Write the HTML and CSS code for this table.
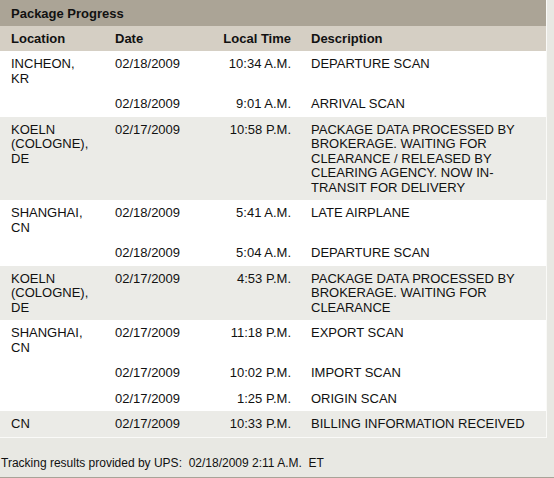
FILE: index.html
```html
<!DOCTYPE html>
<html>
<head>
<meta charset="utf-8">
<link rel="stylesheet" href="styles.css">
</head>
<body>
<div class="panel">
  <div class="panel-title">Package Progress</div>
  <table class="progress">
    <colgroup>
      <col class="c-loc"><col class="c-date"><col class="c-time"><col class="c-desc">
    </colgroup>
    <thead>
      <tr><th>Location</th><th>Date</th><th class="time">Local Time</th><th>Description</th></tr>
    </thead>
    <tbody class="white">
      <tr><td>INCHEON, KR</td><td>02/18/2009</td><td class="time">10:34 A.M.</td><td>DEPARTURE SCAN</td></tr>
      <tr><td></td><td>02/18/2009</td><td class="time">9:01 A.M.</td><td>ARRIVAL SCAN</td></tr>
    </tbody>
    <tbody class="gray">
      <tr><td>KOELN (COLOGNE), DE</td><td>02/17/2009</td><td class="time">10:58 P.M.</td><td>PACKAGE DATA PROCESSED BY BROKERAGE. WAITING FOR CLEARANCE / RELEASED BY CLEARING AGENCY. NOW IN-TRANSIT FOR DELIVERY</td></tr>
    </tbody>
    <tbody class="white">
      <tr><td>SHANGHAI, CN</td><td>02/18/2009</td><td class="time">5:41 A.M.</td><td>LATE AIRPLANE</td></tr>
      <tr><td></td><td>02/18/2009</td><td class="time">5:04 A.M.</td><td>DEPARTURE SCAN</td></tr>
    </tbody>
    <tbody class="gray">
      <tr><td>KOELN (COLOGNE), DE</td><td>02/17/2009</td><td class="time">4:53 P.M.</td><td>PACKAGE DATA PROCESSED BY BROKERAGE. WAITING FOR CLEARANCE</td></tr>
    </tbody>
    <tbody class="white">
      <tr><td>SHANGHAI, CN</td><td>02/17/2009</td><td class="time">11:18 P.M.</td><td>EXPORT SCAN</td></tr>
      <tr><td></td><td>02/17/2009</td><td class="time">10:02 P.M.</td><td>IMPORT SCAN</td></tr>
      <tr><td></td><td>02/17/2009</td><td class="time">1:25 P.M.</td><td>ORIGIN SCAN</td></tr>
    </tbody>
    <tbody class="gray">
      <tr><td>CN</td><td>02/17/2009</td><td class="time">10:33 P.M.</td><td>BILLING INFORMATION RECEIVED</td></tr>
    </tbody>
  </table>
</div>
<div class="footer">Tracking results provided by UPS:&nbsp; 02/18/2009 2:11 A.M.&nbsp; ET</div>
</body>
</html>
```

FILE: styles.css
```css
html, body {
  margin: 0;
  padding: 0;
  background: #e8e8e3;
  font-family: "Liberation Sans", Arial, Helvetica, sans-serif;
  font-size: 13px;
  color: #111;
}

.panel {
  width: 546px;
  border-right: 1px solid #fafaf8;
  border-bottom: 1px solid #fafaf8;
}

.panel-title {
  background: #aba496;
  font-weight: bold;
  line-height: 14.5px;
  padding: 7px 11px 4.5px;
}

.progress {
  width: 100%;
  table-layout: fixed;
  border-collapse: collapse;
  border-spacing: 0;
}

.c-loc { width: 105px; }
.c-date { width: 100px; }
.c-time { width: 96px; }

.progress th,
.progress td {
  text-align: left;
  vertical-align: top;
  line-height: 14.5px;
  padding: 6px 10px 5px;
}

.progress th {
  background: #d5cfc4;
  font-weight: bold;
  padding-top: 6px;
  padding-bottom: 4.5px;
}

.progress th:first-child,
.progress td:first-child {
  padding-left: 11px;
  padding-right: 14px;
}

.progress .time {
  text-align: right;
}

.white td { background: #ffffff; }
.gray td { background: #ebebe7; }

.footer {
  font-size: 12px;
  padding: 18px 1px 7px;
  line-height: 14.5px;
  border-bottom: 2px solid #a8a398;
}
```
